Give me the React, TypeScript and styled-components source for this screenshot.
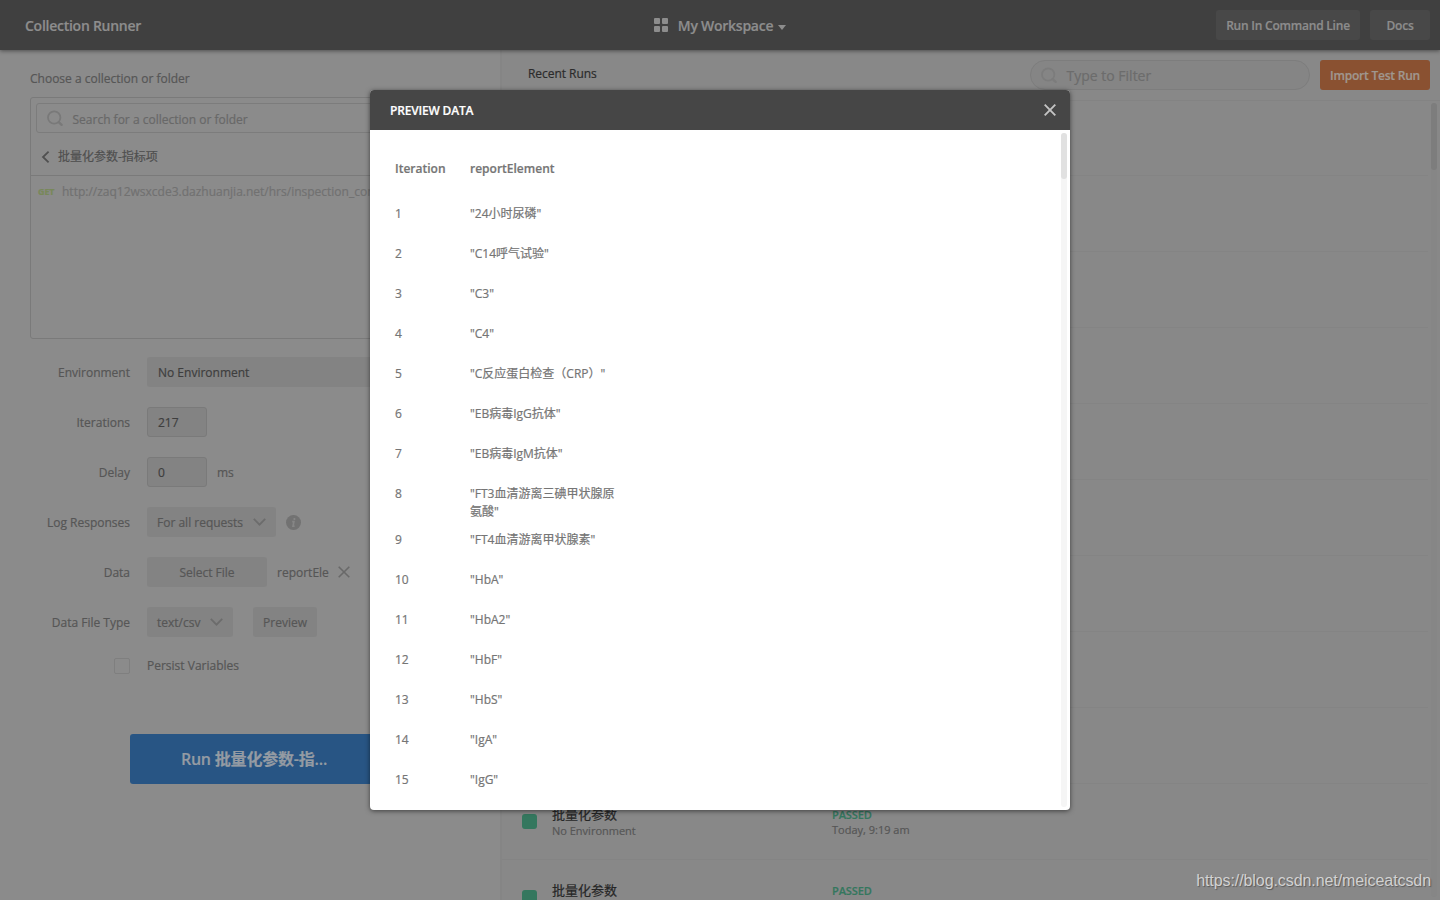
import React from "react";
import styled, { createGlobalStyle } from "styled-components";

const Global = createGlobalStyle`
  * { box-sizing: border-box; }
  body {
    margin: 0;
    overflow: hidden;
    font-family: "Open Sans", "Noto Sans CJK SC", sans-serif;
    font-size: 12px;
    line-height: 18px;
    color: #565656;
    -webkit-text-stroke: 0.2px;
  }
`;

const Page = styled.div`
  display: flex;
  flex-direction: column;
  width: 1440px;
  height: 900px;
  overflow: hidden;
  background: #8b8b8b;
`;

const Header = styled.header`
  display: grid;
  grid-template-columns: 1fr auto 1fr;
  align-items: center;
  flex: none;
  height: 50px;
  padding: 0 10px 0 25px;
  background: #404040;
  color: #8d8d8d;
  box-shadow: 0 1px 4px rgba(0, 0, 0, 0.45);
  z-index: 1;
`;

const Title = styled.div`
  font-size: 14px;
  font-weight: 600;
  letter-spacing: -0.26px;
  padding-top: 2px;
`;

const Workspace = styled.div`
  display: flex;
  align-items: center;
  margin-right: 15px;
  svg { display: block; }
`;

const WorkspaceName = styled(Title)`
  margin: 0 5px 0 10px;
`;

const HeaderActions = styled.div`
  display: flex;
  justify-content: flex-end;
  gap: 10px;
`;

const HeaderButton = styled.button<{ $width: number }>`
  width: ${(p) => p.$width}px;
  height: 30px;
  padding: 1px 0 0;
  border: 0;
  border-radius: 3px;
  background: #484848;
  color: #8d8d8d;
  font: 600 12px "Open Sans", sans-serif;
  letter-spacing: -0.22px;
  white-space: nowrap;
`;

const Main = styled.main`
  display: flex;
  flex: 1;
  min-height: 0;
`;

const SetupPane = styled.section`
  width: 502px;
  flex: none;
  padding: 20px 30px 0;
  border-right: 2px solid #858585;
`;

const CollectionBox = styled.div`
  height: 242px;
  margin-top: 9px;
  border: 1px solid #7a7a7a;
  border-radius: 3px;
  overflow: hidden;
`;

const SearchField = styled.div`
  display: flex;
  align-items: center;
  height: 30px;
  margin: 5px;
  padding: 0 10px;
  gap: 8.5px;
  border: 1px solid #7c7c7c;
  border-radius: 3px;
  color: #686868;
  span { padding-top: 3px; }
`;

const Crumb = styled.div`
  display: flex;
  align-items: center;
  height: 38px;
  padding: 0 10px;
  margin-top: 5px;
  gap: 8px;
  border-bottom: 1px solid #7a7a7a;
  color: #4f4f4f;
`;

const RequestRow = styled.div`
  display: flex;
  align-items: center;
  height: 31px;
  padding: 1px 7px 0;
  white-space: nowrap;
  color: #717171;
`;

const Method = styled.span`
  width: 24px;
  flex: none;
  font-size: 9px;
  font-weight: 700;
  letter-spacing: -0.1px;
  color: #78885a;
`;

const Form = styled.div`
  margin-top: 18px;
`;

const Field = styled.div<{ $height?: number }>`
  display: flex;
  align-items: center;
  height: ${(p) => p.$height ?? 30}px;
  margin-bottom: 20px;
`;

const Label = styled.label`
  width: 100px;
  margin-right: 17px;
  padding-top: 2px;
  flex: none;
  text-align: right;
`;

const Control = styled.div<{ $width: number; $bordered?: boolean; $dark?: boolean; $center?: boolean }>`
  display: flex;
  align-items: center;
  justify-content: ${(p) => (p.$center ? "center" : "space-between")};
  flex: none;
  width: ${(p) => p.$width}px;
  height: 30px;
  padding: 2px ${(p) => (p.$dark ? 11 : 10)}px 0;
  border-radius: 3px;
  background: #838383;
  white-space: nowrap;
  color: ${(p) => (p.$dark ? "#3e3e3e" : "#565656")};
  ${(p) => p.$bordered && "border: 1px solid #7a7a7a; padding: 2px 10px 0;"}
  svg { margin-top: -2px; }
`;

const Trailing = styled.span<{ $gap?: number; $text?: boolean }>`
  display: flex;
  margin-left: ${(p) => p.$gap ?? 10}px;
  padding-top: ${(p) => (p.$text ? 2 : 0)}px;
`;

const Checkbox = styled.span`
  width: 16px;
  height: 16px;
  margin: 0 17px 0 84px;
  border: 1px solid #7f7f7f;
  border-radius: 2px;
`;

const RunButton = styled.button`
  display: block;
  width: 240px;
  height: 50px;
  margin: 59px 0 0 100px;
  padding: 0 0 2px 8px;
  border: 0;
  border-radius: 3px 0 0 3px;
  background: #285584;
  color: #949ba3;
  font: 600 16px "Open Sans", "Noto Sans CJK SC", sans-serif;
  letter-spacing: -0.2px;
`;

const RunsPane = styled.section`
  display: flex;
  flex-direction: column;
  flex: 1;
  min-width: 0;
  background: #888;
`;

const RunsHeader = styled.div`
  display: flex;
  align-items: center;
  flex: none;
  height: 51px;
  padding: 0 10px 0 26px;
  border-bottom: 1px solid #838383;
`;

const RunsTitle = styled.div`
  flex: 1;
  margin-top: -3px;
  letter-spacing: -0.05px;
  color: #2b2b2b;
`;

const Filter = styled.div`
  display: flex;
  align-items: center;
  width: 280px;
  height: 30px;
  padding: 0 10px;
  gap: 8.5px;
  border: 1px solid #7d7d7d;
  border-radius: 15px;
  background: #858585;
  font-size: 14px;
  color: #6c6c6c;
  span { padding-top: 2px; }
`;

const ImportButton = styled.button`
  width: 110px;
  height: 30px;
  margin-left: 10px;
  padding: 1px 0 0;
  border: 0;
  border-radius: 3px;
  background: #8a5131;
  color: #a0978f;
  font: 600 12px "Open Sans", sans-serif;
  letter-spacing: -0.22px;
`;

const RunsBody = styled.div`
  display: flex;
  flex: 1;
  min-height: 0;
`;

const RunList = styled.div`
  flex: 1;
  overflow: hidden;
`;

const Run = styled.div<{ $first?: boolean }>`
  display: grid;
  grid-template-columns: 30px 280px 1fr;
  height: ${(p) => (p.$first ? 75 : 76)}px;
  padding: 21px 0 0 20px;
  border-bottom: 1px solid #848484;
`;

const Status = styled.i`
  width: 15px;
  height: 15px;
  margin-top: 9px;
  border-radius: 3px;
  background: #34775e;
`;

const RunName = styled.div`
  font-size: 13px;
  line-height: 19px;
  color: #262626;
`;

const RunMeta = styled.div`
  font-size: 11px;
  line-height: 15px;
  margin-top: -1px;
`;

const Passed = styled.div`
  padding-top: 1px;
  font-size: 11px;
  font-weight: 600;
  line-height: 17px;
  letter-spacing: -0.1px;
  color: #34775e;
`;

const Track = styled.div<{ $light?: boolean }>`
  width: 6px;
  flex: none;
  margin: ${(p) => (p.$light ? 3 : 2)}px 3px 3px;
  border-radius: 3px;
  background: ${(p) => (p.$light ? "#f5f5f5" : "#868686")};
`;

const Thumb = styled.div<{ $height: number; $light?: boolean }>`
  height: ${(p) => p.$height}px;
  border-radius: 3px;
  background: ${(p) => (p.$light ? "#e1e1e1" : "#7d7d7d")};
`;

const Overlay = styled.div`
  position: absolute;
  inset: 0 auto auto 0;
  width: 1440px;
  height: 900px;
  display: flex;
  align-items: center;
  justify-content: center;
  z-index: 2;
`;

const Modal = styled.div`
  display: flex;
  flex-direction: column;
  width: 700px;
  height: 720px;
  border-radius: 4px;
  overflow: hidden;
  background: #fff;
  box-shadow: 0 1px 5px rgba(0, 0, 0, 0.55);
`;

const ModalHeader = styled.div`
  display: flex;
  align-items: center;
  justify-content: space-between;
  flex: none;
  height: 40px;
  padding: 0 14px 0 20px;
  background: #464646;
  color: #fff;
  font-weight: 600;
  letter-spacing: -0.18px;
  span { padding-top: 2px; }
`;

const ModalBody = styled.div`
  display: flex;
  flex: 1;
  min-height: 0;
`;

const Table = styled.div`
  flex: 1;
  padding: 25px 25px 0;
  overflow: hidden;
  color: #757575;
`;

const DataRow = styled.div<{ $head?: boolean }>`
  display: grid;
  grid-template-columns: 75px 150px;
  min-height: ${(p) => (p.$head ? 45 : 40)}px;
  padding: 5px 0;
  font-weight: ${(p) => (p.$head ? 600 : 400)};
`;

const Watermark = styled.div`
  position: absolute;
  right: 9px;
  bottom: 7px;
  font: 16px/24px "Liberation Sans", Arial, sans-serif;
  letter-spacing: -0.08px;
  color: #d2d2d2;
  -webkit-text-stroke: 0;
  text-shadow: 1px 1px 1px rgba(0, 0, 0, 0.35);
`;

const SearchIcon = ({ color }: { color: string }) => (
  <svg width="17" height="17" viewBox="0 0 17 17" fill="none" stroke={color} strokeLinecap="round">
    <circle cx="7.2" cy="7.5" r="6.2" strokeWidth="1.8" />
    <path d="M12 12.3l2.6 2.5" strokeWidth="2.4" />
  </svg>
);

const Cross = ({ size, color, width }: { size: number; color: string; width: number }) => (
  <svg width={size} height={size} viewBox="0 0 12 12" stroke={color} strokeWidth={width}>
    <path d="M.7.7l10.6 10.6M11.3.7L.7 11.3" />
  </svg>
);

const Chevron = () => (
  <svg width="13" height="8" viewBox="0 0 13 8" fill="none" stroke="#6c6c6c" strokeWidth="1.8">
    <path d="M.8.8l5.7 5.8L12.2.8" />
  </svg>
);

const values = [
  '"24小时尿磷"',
  '"C14呼气试验"',
  '"C3"',
  '"C4"',
  '"C反应蛋白检查（CRP）"',
  '"EB病毒IgG抗体"',
  '"EB病毒IgM抗体"',
  '"FT3血清游离三碘甲状腺原氨酸"',
  '"FT4血清游离甲状腺素"',
  '"HbA"',
  '"HbA2"',
  '"HbF"',
  '"HbS"',
  '"IgA"',
  '"IgG"',
];

const runs = [
  ...Array.from({ length: 9 }, () => null),
  { name: "批量化参数", env: "No Environment", time: "Today, 9:19 am" },
  { name: "批量化参数", env: "", time: "" },
];

export default function App() {
  return (
    <>
      <Global />
      <Page>
        <Header>
          <Title>Collection Runner</Title>
          <Workspace>
            <svg width="14" height="14" viewBox="0 0 14 14" fill="#8d8d8d">
              <rect width="6" height="6" rx="1" />
              <rect x="8" width="6" height="6" rx="1" />
              <rect y="8" width="6" height="6" rx="1" />
              <rect x="8" y="8" width="6" height="6" rx="1" />
            </svg>
            <WorkspaceName>My Workspace</WorkspaceName>
            <svg width="8" height="9" viewBox="0 0 8 9" fill="#8d8d8d">
              <path d="M0 4h8L4 9z" />
            </svg>
          </Workspace>
          <HeaderActions>
            <HeaderButton $width={144}>Run In Command Line</HeaderButton>
            <HeaderButton $width={60}>Docs</HeaderButton>
          </HeaderActions>
        </Header>
        <Main>
          <SetupPane>
            <div>Choose a collection or folder</div>
            <CollectionBox>
              <SearchField>
                <SearchIcon color="#797979" />
                <span>Search for a collection or folder</span>
              </SearchField>
              <Crumb>
                <svg width="9" height="12" viewBox="0 0 9 12" fill="none" stroke="#505050" strokeWidth="1.8">
                  <path d="M7.6.7L2 6l5.6 5.3" />
                </svg>
                批量化参数-指标项
              </Crumb>
              <RequestRow>
                <Method>GET</Method>
                http://zaq12wsxcde3.dazhuanjia.net/hrs/inspection_con
              </RequestRow>
            </CollectionBox>
            <Form>
              <Field>
                <Label>Environment</Label>
                <Control $width={323} $dark>No Environment</Control>
              </Field>
              <Field>
                <Label>Iterations</Label>
                <Control $width={60} $dark $bordered>217</Control>
              </Field>
              <Field>
                <Label>Delay</Label>
                <Control $width={60} $dark $bordered>0</Control>
                <Trailing $text>ms</Trailing>
              </Field>
              <Field>
                <Label>Log Responses</Label>
                <Control $width={129}>For all requests <Chevron /></Control>
                <Trailing>
                  <svg width="15" height="15" viewBox="0 0 15 15">
                    <circle cx="7.5" cy="7.5" r="7.5" fill="#727272" />
                    <path d="M8.4 3v1.9M6.2 6.7h1.7l-.9 4.4h1.6" fill="none" stroke="#868686" strokeWidth="1.7" />
                  </svg>
                </Trailing>
              </Field>
              <Field>
                <Label>Data</Label>
                <Control $width={120} $center>Select File</Control>
                <Trailing $text>reportEle</Trailing>
                <Trailing $gap={9}><Cross size={12} color="#696969" width={1.6} /></Trailing>
              </Field>
              <Field>
                <Label>Data File Type</Label>
                <Control $width={86}>text/csv <Chevron /></Control>
                <Trailing $gap={20}><Control $width={64} $center>Preview</Control></Trailing>
              </Field>
              <Field $height={18}>
                <Checkbox />
                Persist Variables
              </Field>
            </Form>
            <RunButton>Run 批量化参数-指...</RunButton>
          </SetupPane>
          <RunsPane>
            <RunsHeader>
              <RunsTitle>Recent Runs</RunsTitle>
              <Filter>
                <SearchIcon color="#7c7c7c" />
                <span>Type to Filter</span>
              </Filter>
              <ImportButton>Import Test Run</ImportButton>
            </RunsHeader>
            <RunsBody>
              <RunList>
                {runs.map((run, i) => (
                  <Run key={i} $first={i === 0}>
                    {run && (
                      <>
                        <Status />
                        <div>
                          <RunName>{run.name}</RunName>
                          <RunMeta>{run.env}</RunMeta>
                        </div>
                        <div>
                          <Passed>PASSED</Passed>
                          <RunMeta>{run.time}</RunMeta>
                        </div>
                      </>
                    )}
                  </Run>
                ))}
              </RunList>
              <Track><Thumb $height={67} /></Track>
            </RunsBody>
          </RunsPane>
        </Main>
      </Page>
      <Overlay>
        <Modal>
          <ModalHeader>
            <span>PREVIEW DATA</span>
            <Cross size={12} color="#c4c4c4" width={1.9} />
          </ModalHeader>
          <ModalBody>
            <Table>
              <DataRow $head>
                <span>Iteration</span>
                <span>reportElement</span>
              </DataRow>
              {values.map((value, i) => (
                <DataRow key={value}>
                  <span>{i + 1}</span>
                  <span>{value}</span>
                </DataRow>
              ))}
            </Table>
            <Track $light><Thumb $height={46} $light /></Track>
          </ModalBody>
        </Modal>
        <Watermark>https://blog.csdn.net/meiceatcsdn</Watermark>
      </Overlay>
    </>
  );
}
